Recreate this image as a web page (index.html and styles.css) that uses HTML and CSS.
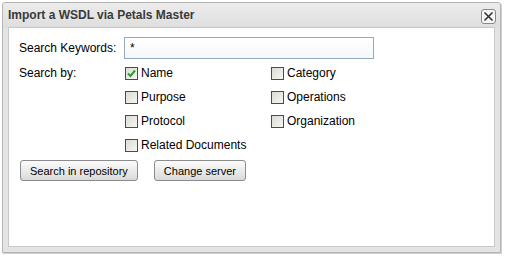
FILE: index.html
```html
<!DOCTYPE html>
<html lang="en">
<head>
  <meta charset="UTF-8" />
  <title>Import a WSDL via Petals Master</title>
  <link rel="stylesheet" href="styles.css">
</head>
<body>

<div class="window">
  <div class="titlebar">
    <span class="title">Import a WSDL via Petals Master</span>
    <span class="close">
      <svg width="11" height="11" viewBox="0 0 11 11"><path d="M1.5 1.5 L9.5 9.5 M9.5 1.5 L1.5 9.5" stroke="#333" stroke-width="1.6" fill="none"/></svg>
    </span>
  </div>

  <div class="content">
    <div class="row">
      <label class="field-label" for="keywords">Search Keywords:</label>
      <input id="keywords" class="text-input" type="text" value="*">
    </div>

    <div class="row search-by">
      <span class="field-label">Search by:</span>
      <div class="options">
        <div class="option"><span class="box checked"><svg width="11" height="11" viewBox="0 0 11 11"><path d="M2 5.5 L4.5 8 L9 2.5" stroke="#2f9a2f" stroke-width="2" fill="none"/></svg></span>Name</div>
        <div class="option"><span class="box"></span>Category</div>
        <div class="option"><span class="box"></span>Purpose</div>
        <div class="option"><span class="box"></span>Operations</div>
        <div class="option"><span class="box"></span>Protocol</div>
        <div class="option"><span class="box"></span>Organization</div>
        <div class="option"><span class="box"></span>Related Documents</div>
      </div>
    </div>

    <div class="buttons">
      <button class="btn">Search in repository</button>
      <button class="btn">Change server</button>
    </div>
  </div>
</div>

</body>
</html>
```

FILE: styles.css
```css
body {
  margin: 0;
  font-family: 'Liberation Sans', Arial, sans-serif;
  font-size: 12px;
  color: #000;
  background: #fff;
}

.window {
  margin: 2px;
  width: 497px;
  height: 249px;
  border: 1px solid #b4b4b4;
  border-radius: 3px 3px 0 0;
  background: linear-gradient(#ececec, #dedede 25px, #e4e4e4 26px, #e4e4e4);
  display: flex;
  flex-direction: column;
  box-shadow: 1px 1px 0 #d0d0d0;
}

.titlebar {
  height: 24px;
  display: flex;
  align-items: center;
  justify-content: space-between;
  padding: 0 4px 0 5px;
}

.title {
  font-weight: bold;
  font-size: 12px;
  color: #3a3a3a;
}

.close {
  width: 13px;
  height: 13px;
  border: 1px solid #8a8a8a;
  border-radius: 3px;
  background: #f6f6f6;
  display: flex;
  align-items: center;
  justify-content: center;
  margin-top: 2px;
}

.content {
  flex: 1;
  margin: 0 5px 5px 5px;
  background: #fff;
  border: 1px solid #c8c8c8;
  padding: 9px 10px;
}

.row {
  display: flex;
  align-items: center;
}

.field-label {
  width: 105px;
  flex-shrink: 0;
}

.text-input {
  width: 250px;
  height: 22px;
  box-sizing: border-box;
  border: 1px solid #8fa9c6;
  background: linear-gradient(#ffffff, #f4f7fb);
  font-family: inherit;
  font-size: 12px;
  padding: 0 5px;
  margin: 0;
  outline: none;
}

.search-by {
  align-items: flex-start;
  margin-top: 2px;
}

.search-by .field-label {
  line-height: 24px;
}

.options {
  display: grid;
  grid-template-columns: 146px auto;
  grid-auto-rows: 24px;
}

.option {
  display: flex;
  align-items: center;
  gap: 3px;
}

.box {
  width: 11px;
  height: 11px;
  border: 1px solid #33506e;
  background: linear-gradient(135deg, #dcdcd6, #f6f6f2);
  display: flex;
  align-items: center;
  justify-content: center;
  margin-left: 1px;
}

.option:nth-child(7) {
  grid-column: 1;
}

.buttons {
  display: flex;
  gap: 16px;
  margin-top: 3px;
  padding-left: 1px;
}

.btn {
  height: 21px;
  padding: 0 9px;
  font-family: inherit;
  font-size: 11px;
  color: #000;
  border: 1px solid #8c8c8c;
  border-radius: 3px;
  background: linear-gradient(#fbfbfb, #e8e8e8 60%, #d9d9d9);
}
```
